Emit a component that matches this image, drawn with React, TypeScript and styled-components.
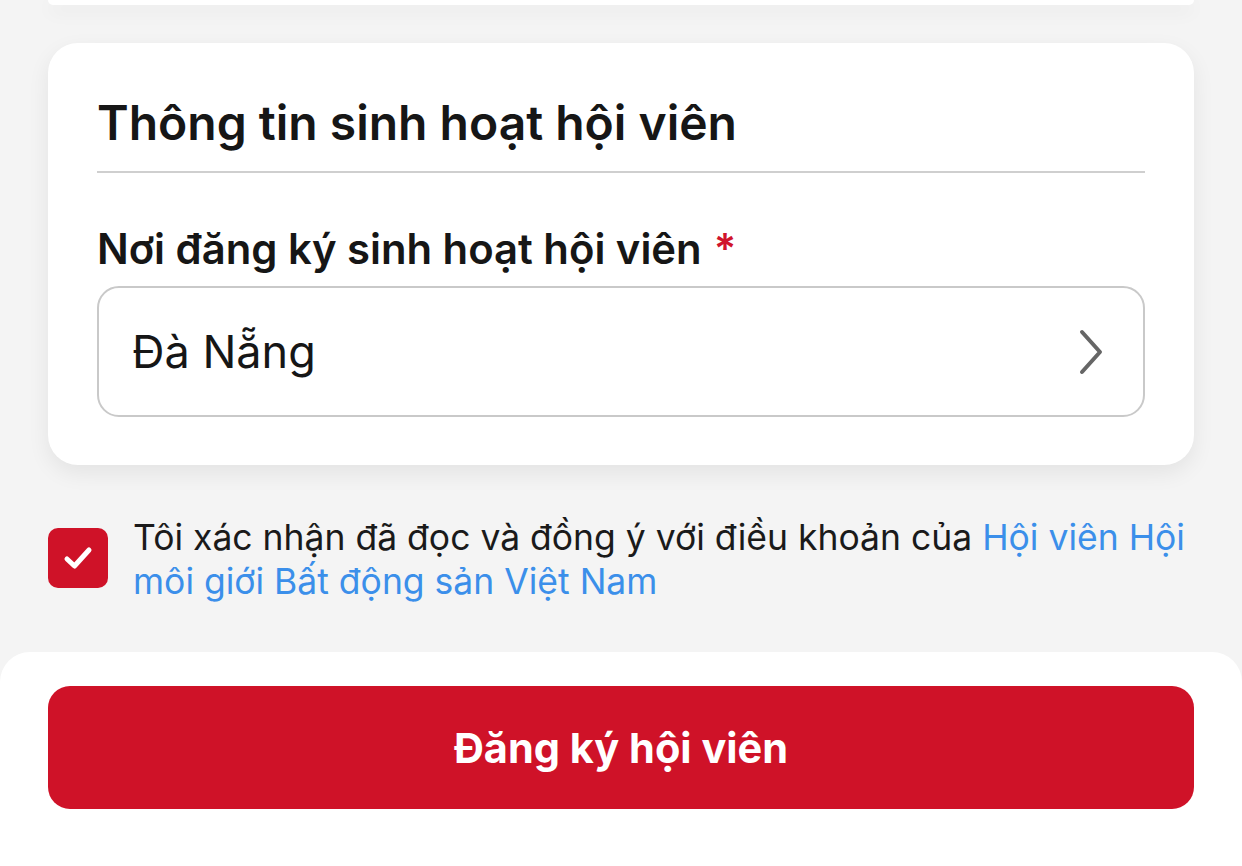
import React, { useState } from "react";
import styled, { createGlobalStyle } from "styled-components";

const Global = createGlobalStyle`
  html, body { margin: 0; padding: 0; }
  body {
    background: #f4f4f4;
    font-family: Inter, "Noto Sans", sans-serif;
    color: #161616;
    -webkit-font-smoothing: antialiased;
  }
`;

const Page = styled.div`
  min-height: 866px;
  display: flex;
  flex-direction: column;
  overflow: hidden;
`;

const Content = styled.div`
  padding: 0 48px;
  display: flex;
  flex-direction: column;
`;

const PrevCard = styled.div`
  height: 5px;
  background: #ffffff;
  border-radius: 0 0 30px 30px;
  box-shadow: 0 6px 18px rgba(0, 0, 0, 0.08);
`;

const Card = styled.section`
  margin-top: 38px;
  background: #ffffff;
  border-radius: 30px;
  padding: 50px 49px 48px;
  box-shadow: 0 8px 22px rgba(0, 0, 0, 0.07);
  display: flex;
  flex-direction: column;
`;

const Title = styled.h2`
  margin: 0;
  font-size: 48px;
  line-height: 60px;
  font-weight: 600;
  color: #161616;
`;

const Divider = styled.hr`
  margin: 18px 0 0;
  border: none;
  height: 2px;
  background: #cfcfcf;
`;

const Label = styled.label`
  margin-top: 50px;
  font-size: 41.8px;
  line-height: 52px;
  font-weight: 600;
  color: #161616;
`;

const Required = styled.span`
  color: #d0142c;
  margin-left: 12px;
`;

const Select = styled.button`
  box-sizing: border-box;
  margin-top: 11px;
  height: 131px;
  border: 2px solid #c9c9c9;
  border-radius: 22px;
  background: #ffffff;
  padding: 0 34px 0 33px;
  display: flex;
  align-items: center;
  justify-content: space-between;
  font-family: inherit;
  font-size: 45px;
  color: #161616;
  cursor: pointer;
  text-align: left;
`;

const Chevron = styled.svg`
  width: 36px;
  height: 48px;
  flex: none;
`;

const ConsentRow = styled.div`
  margin-top: 51px;
  display: flex;
  align-items: flex-start;
  gap: 25px;
`;

const CheckBox = styled.button<{ $checked: boolean }>`
  margin-top: 12px;
  flex: none;
  width: 60px;
  height: 60px;
  border-radius: 10px;
  border: none;
  padding: 0;
  background: ${(p) => (p.$checked ? "#cf1228" : "#ffffff")};
  display: flex;
  align-items: center;
  justify-content: center;
  cursor: pointer;
`;

const ConsentText = styled.p`
  margin: 0;
  font-size: 35.5px;
  line-height: 44px;
  color: #1a1a1a;
`;

const Link = styled.a`
  color: #3b8fea;
  text-decoration: none;
`;

const Footer = styled.footer`
  margin-top: 48px;
  flex: 1;
  background: #ffffff;
  border-radius: 30px 30px 0 0;
  padding: 34px 48px 58px;
`;

const SubmitButton = styled.button`
  width: 100%;
  height: 123px;
  border: none;
  border-radius: 22px;
  background: #cf1228;
  color: #ffffff;
  font-family: inherit;
  font-size: 41.5px;
  font-weight: 700;
  cursor: pointer;
`;

export default function App() {
  const [checked, setChecked] = useState(true);
  return (
    <>
      <Global />
      <Page>
        <Content>
          <PrevCard />
          <Card>
            <Title>Thông tin sinh hoạt hội viên</Title>
            <Divider />
            <Label>
              Nơi đăng ký sinh hoạt hội viên<Required>*</Required>
            </Label>
            <Select type="button">
              <span>Đà Nẵng</span>
              <Chevron viewBox="0 0 36 48" fill="none">
                <path
                  d="M9 4 L27 24 L9 44"
                  stroke="#666666"
                  strokeWidth="4"
                  strokeLinecap="round"
                  strokeLinejoin="round"
                />
              </Chevron>
            </Select>
          </Card>
          <ConsentRow>
            <CheckBox
              type="button"
              $checked={checked}
              onClick={() => setChecked(!checked)}
              aria-pressed={checked}
            >
              {checked && (
                <svg width="34" height="34" viewBox="0 0 34 34" fill="none">
                  <path
                    d="M6 18 L13.5 25 L28 9"
                    stroke="#ffffff"
                    strokeWidth="5"
                    strokeLinecap="round"
                    strokeLinejoin="round"
                  />
                </svg>
              )}
            </CheckBox>
            <ConsentText>
              Tôi xác nhận đã đọc và đồng ý với điều khoản của{" "}
              <Link href="#">Hội viên Hội môi giới Bất động sản Việt Nam</Link>
            </ConsentText>
          </ConsentRow>
        </Content>
        <Footer>
          <SubmitButton type="button">Đăng ký hội viên</SubmitButton>
        </Footer>
      </Page>
    </>
  );
}
